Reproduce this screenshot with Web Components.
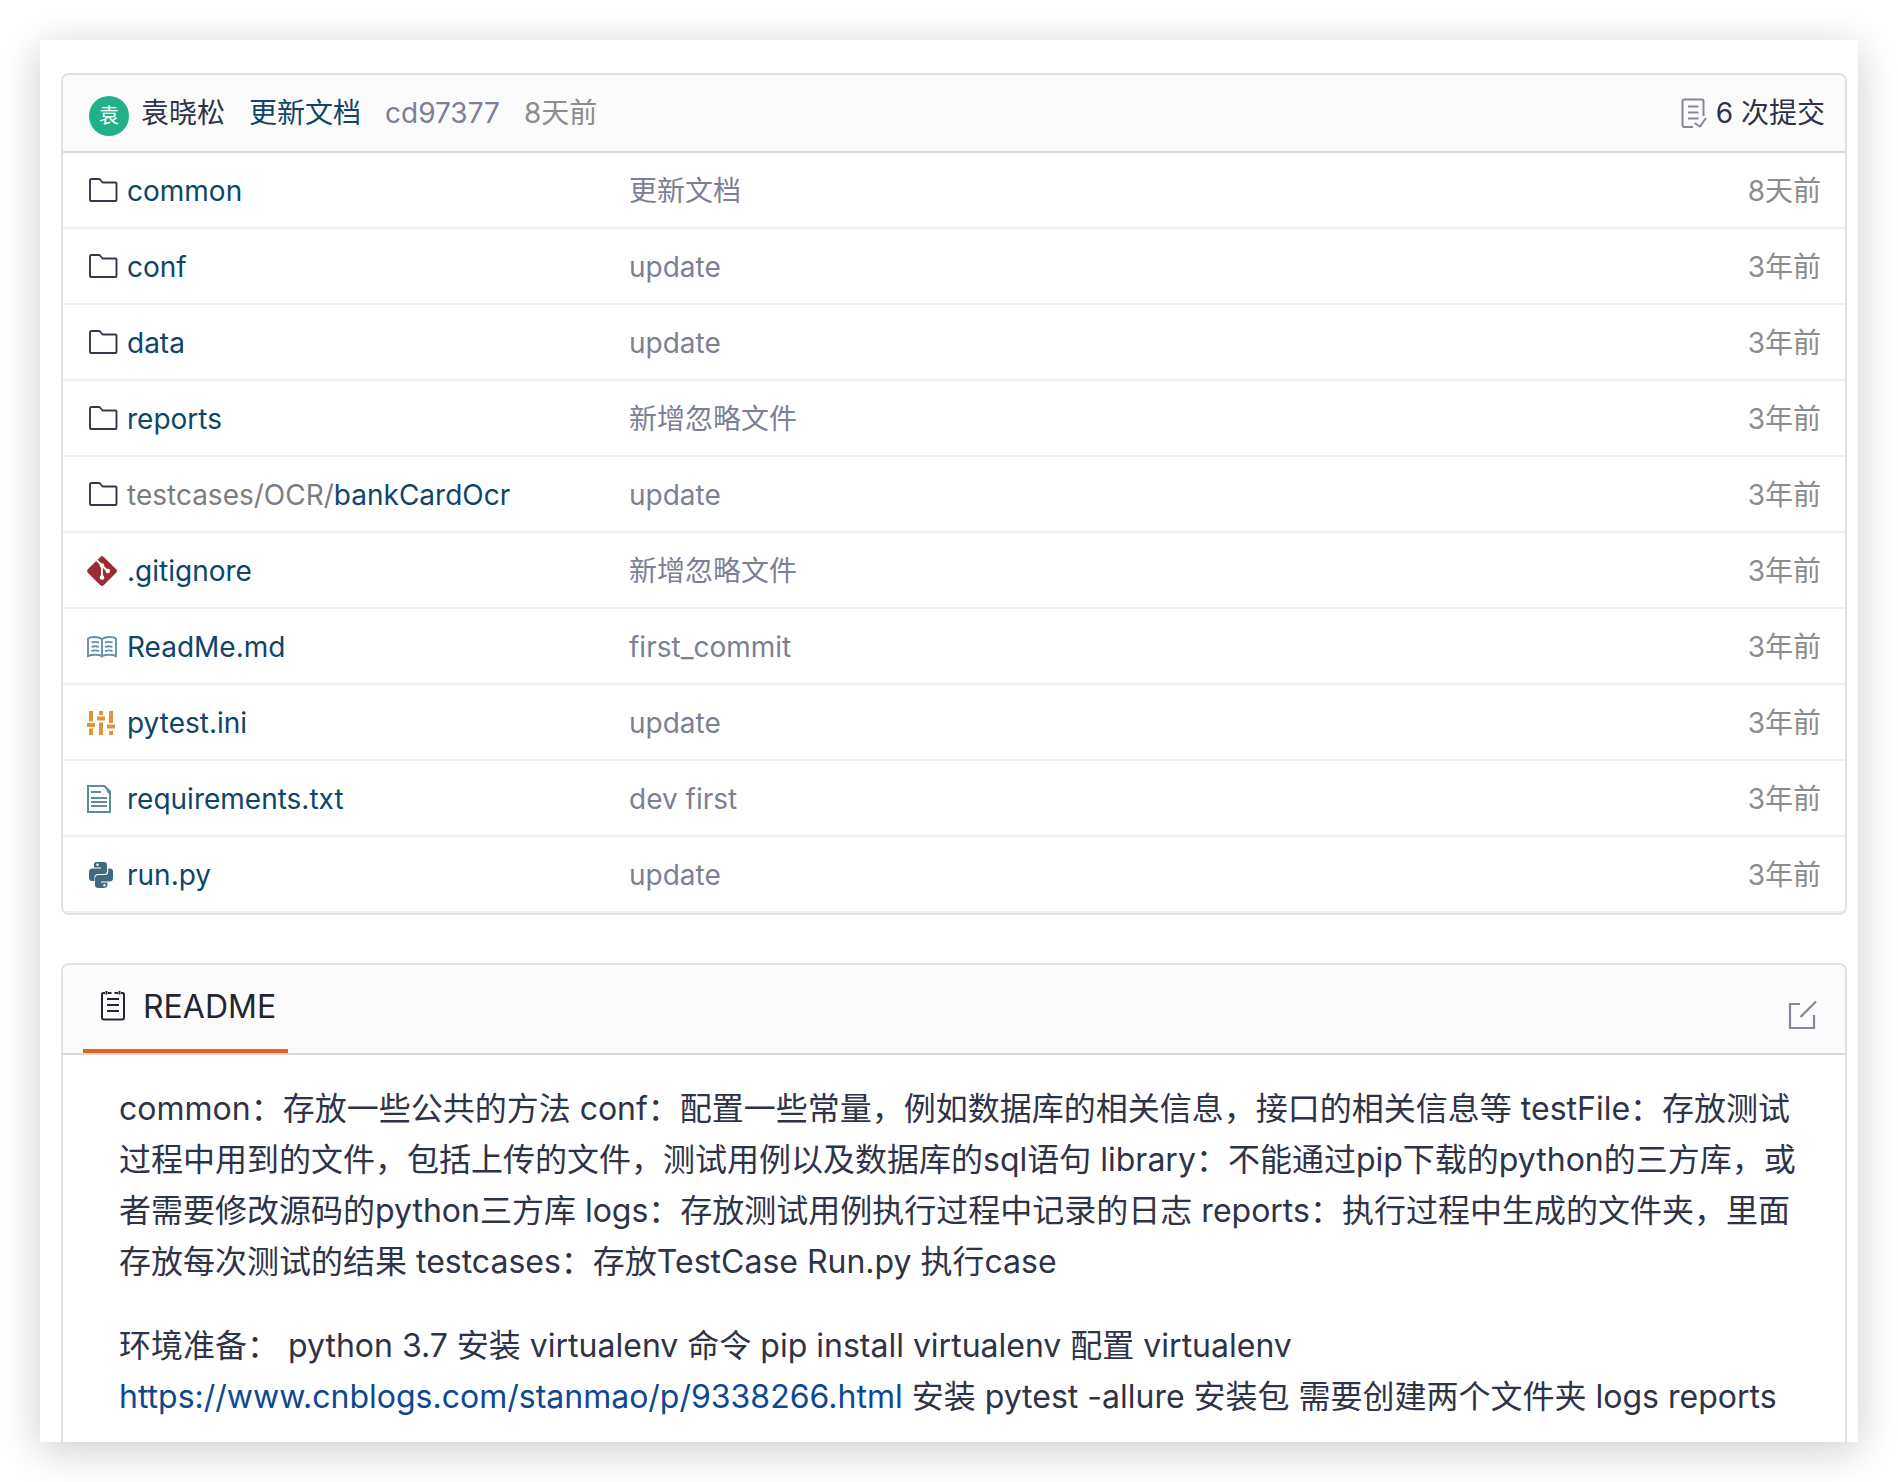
<!DOCTYPE html>
<html lang="zh-CN">
<head>
<meta charset="utf-8">
<meta name="viewport" content="width=device-width, initial-scale=1">
<title>README</title>
<style>
  body {
    margin: 0;
    padding: 40px;
    background: #fff;
    color: #2f3347;
    font-family: Inter, "Noto Sans CJK SC", sans-serif;
    font-size: 28px;
    line-height: 40px;
    --link: #10456a;
    --muted: #7c7f95;
    --date: #8c8c8c;
    --line: #dce2e6;
    --bar: #fbfbfb;
  }
  readme-body a {
    color: #0e4890;
    text-decoration: none;
    white-space: nowrap;
  }
</style>
</head>
<body>
<repo-window>
  <repo-panel>
    <commit-bar slot="bar" initial="袁" author="袁晓松" message="更新文档" sha="cd97377" age="8天前" count="6 次提交"></commit-bar>
    <file-table></file-table>
  </repo-panel>
  <repo-panel open-end>
    <readme-bar slot="bar">README</readme-bar>
    <readme-body>
      <p>common：存放一些公共的方法 conf：配置一些常量，例如数据库的相关信息，接口的相关信息等 testFile：存放测试过程中用到的文件，包括上传的文件，测试用例以及数据库的sql语句 library：不能通过pip下载的python的三方库，或者需要修改源码的python三方库 logs：存放测试用例执行过程中记录的日志 reports：执行过程中生成的文件夹，里面存放每次测试的结果 testcases：存放TestCase Run.py 执行case</p>
      <p>环境准备： python 3.7 安装 virtualenv 命令 pip install virtualenv 配置 virtualenv <a href="https://www.cnblogs.com/stanmao/p/9338266.html">https://www.cnblogs.com/stanmao/p/9338266.html</a> 安装 pytest -allure 安装包 需要创建两个文件夹 logs reports</p>
    </readme-body>
  </repo-panel>
</repo-window>

<script>
const ICONS = {
  folder: [30, 26, '<path d="M3 2.5Q3 1 4.500 1H12.500L15.500 4.500H28.500Q29.500 4.500 29.500 5.500V22Q29.500 23 28.500 23H4Q3 23 3 22Z" fill="none" stroke="#33374a" stroke-width="1.900" stroke-linejoin="round"/>'],
  git: [30, 30, '<path d="M13.300.9Q15 -.7 16.700.9L29.200 13.300Q30.800 15 29.200 16.700L16.700 29.200Q15 30.700 13.300 29.200L.8 16.700Q-.7 15 .8 13.300Z" fill="#9b2c31"/><g fill="none" stroke="#fff" stroke-width="1.900"><path d="M9.500 4L15 9.500V21"/><path d="M15 9.500L20.500 15"/></g><g fill="#fff"><circle cx="15" cy="9.500" r="2.300"/><circle cx="15" cy="21.500" r="2.300"/><circle cx="20.800" cy="15" r="2.300"/></g>'],
  book: [30, 22, '<g fill="none" stroke="#6391ab" stroke-width="1.900"><path d="M15 3Q12 1 7.500 1T1 2.500V20Q4 18.800 8 18.800T15 20Q18 18.800 22 18.800T29 20V2.500Q27 1 22.500 1T15 3V21.500"/><path d="M4.500 6.500Q8 5.300 12 6.500M4.500 10.800Q8 9.600 12 10.800M4.500 15Q8 13.800 12 15M18 6.500Q22 5.300 25.500 6.500M18 10.800Q22 9.600 25.500 10.800M18 15Q22 13.800 25.500 15"/></g>'],
  sliders: [28, 26, '<g fill="#e0933a"><path d="M2 1H6V11.500H2ZM0 13H8V17H6.500V17H0ZM2 18.500H6V25H2ZM12 1H16V5H12ZM10 6.500H18V10.500H10ZM12 12.500H16V25H12ZM22 1H26V13H22ZM20 14.500H28V18.500H20ZM22 21H26V25H22Z"/></g>'],
  text: [24, 28, '<path d="M1 1H17.500L23 6.500V27H1Z" fill="none" stroke="#5f8a9f" stroke-width="2"/><path d="M17 0L24 7V8.500H21Z" fill="#5f8a9f"/><path d="M4 7H14M4 13H20M4 17H20M4 21H20" stroke="#5f8a9f" stroke-width="1.800"/>'],
  python: [26, 26, '<g transform="translate(2)"><g fill="#3f6a7f"><path d="M7 0H15Q18 0 18 3V9Q18 12 15 12H9Q5.500 12 5.500 15.500V19H3Q0 19 0 15.500V10Q0 6.500 3.500 6.500H12V5.500H5V2Q5 0 7 0Z"/><path d="M19.200 6.500H21Q24 6.500 24 9.500V16Q24 19.500 20.500 19.500H12V20.500H18.500V22.500Q18.500 26 14.500 26H9.500Q6 26 6 23V16.500Q6 13 9.500 13H15.500Q19.200 13 19.200 9.500Z"/></g><circle cx="8.500" cy="2.800" r="1.200" fill="#fff"/><circle cx="15.500" cy="23.200" r="1.200" fill="#fff"/></g>'],
  commits: [26, 30, '<g fill="none" stroke="#85869b" stroke-width="2"><path d="M12 29H3.500Q1.500 29 1.500 27V3Q1.500 1.500 3.500 1.500H21Q22.500 1.500 22.500 3V18"/><path d="M7 8.500H17.500M7 14.500H17.500M7 20.500H17.500M13.500 25L19 28.500L25 20"/></g>'],
  notes: [26, 32, '<g fill="none" stroke="#24262e" stroke-width="2"><path d="M5 2H3.500Q2 2 2 3.500V26.500Q2 28.500 4 28.500H22Q24 28.500 24 26.500V3.500Q24 2 22.500 2H21"/><path d="M8 2H11.500M14.500 2H18M6.500 0V3.500M19.500 0V3.500M7 8H19M7 14H19M7 20H19"/></g>'],
  edit: [30, 30, '<path d="M12 4H2V28H26V15M12.500 17L28 1.500" fill="none" stroke="#85869b" stroke-width="2.200"/>']
};

const FILES = [
  ['folder', '', 'common', '更新文档', '8天前'],
  ['folder', '', 'conf', 'update', '3年前'],
  ['folder', '', 'data', 'update', '3年前'],
  ['folder', '', 'reports', '新增忽略文件', '3年前'],
  ['folder', 'testcases/OCR/', 'bankCardOcr', 'update', '3年前'],
  ['git', '', '.gitignore', '新增忽略文件', '3年前'],
  ['book', '', 'ReadMe.md', 'first_commit', '3年前'],
  ['sliders', '', 'pytest.ini', 'update', '3年前'],
  ['text', '', 'requirements.txt', 'dev first', '3年前'],
  ['python', '', 'run.py', 'update', '3年前']
];

class Base extends HTMLElement {
  connectedCallback() {
    if (!this.shadowRoot) this.attachShadow({ mode: 'open' }).innerHTML = this.render();
  }
}

customElements.define('repo-icon', class extends Base {
  render() {
    const [w, h, body] = ICONS[this.getAttribute('name')];
    return `<style>:host{display:block;flex:none}svg{display:block;overflow:visible}</style>
      <svg width="${w}" height="${h}" viewBox="0 0 ${w} ${h}" aria-hidden="true">${body}</svg>`;
  }
});

customElements.define('repo-window', class extends Base {
  render() {
    return `<style>
      :host{display:flex;flex-direction:column;gap:48px;padding:33px 11px 0 21px;background:#fff;
        box-shadow:0 8px 40px rgba(0,0,0,.2)}
    </style><slot></slot>`;
  }
});

customElements.define('repo-panel', class extends Base {
  render() {
    return `<style>
      :host{display:block;border:2px solid var(--line);border-radius:8px;overflow:hidden}
      :host([open-end]){border-bottom:0;border-radius:8px 8px 0 0}
      header{background:var(--bar);border-bottom:2px solid #d6dbdf}
    </style><header><slot name="bar"></slot></header><slot></slot>`;
  }
});

customElements.define('commit-bar', class extends Base {
  render() {
    const a = n => this.getAttribute(n);
    return `<style>
      :host{display:flex;align-items:center;gap:24px;height:76px;padding:0 20px 0 26px}
      .who{display:flex;align-items:center;gap:12px}
      .avatar{width:40px;height:40px;margin-top:6px;border-radius:50%;background:#22b08a;color:#fff;
        font-size:20px;text-align:center}
      a{text-decoration:none;color:inherit}
      .msg{color:var(--link)} .sha{color:var(--muted)} .age{color:var(--date)}
      .count{display:flex;align-items:center;gap:9px;margin-left:auto}
    </style>
    <span class="who"><span class="avatar">${a('initial')}</span><a href="#author">${a('author')}</a></span>
    <a class="msg" href="#commit">${a('message')}</a>
    <a class="sha" href="#sha">${a('sha')}</a>
    <span class="age">${a('age')}</span>
    <a class="count" href="#commits"><repo-icon name="commits"></repo-icon><span>${a('count')}</span></a>`;
  }
});

customElements.define('file-table', class extends Base {
  render() {
    const rows = FILES.map(([icon, path, name, msg, age]) => `<tr>
      <td class="name"><div><span class="icon"><repo-icon name="${icon}"></repo-icon></span><a href="#${name}">${path ? `<span>${path}</span>` : ''}${name}</a></div></td>
      <td class="msg">${msg}</td><td class="age">${age}</td></tr>`).join('');
    return `<style>
      :host{display:block}
      table{width:100%;table-layout:fixed;border-spacing:0}
      td{height:72px;padding:2px 0 0;border-bottom:2px solid #edf0f2}
      .name{width:542px;padding-left:24px}
      .name div{display:flex;align-items:center;gap:10px}
      .icon{width:30px;display:flex}
      a{color:var(--link);text-decoration:none}
      a span{color:#7d7d7d}
      .msg{color:var(--muted)}
      .age{width:200px;padding-right:24px;text-align:right;color:var(--date)}
    </style><table><tbody>${rows}</tbody></table>`;
  }
});

customElements.define('readme-bar', class extends Base {
  render() {
    return `<style>
      :host{display:flex;align-items:center;justify-content:space-between;height:88px;padding:0 27px 0 20px}
      .tab{display:flex;align-items:center;gap:17px;height:84px;padding:0 12px 0 17px;border-bottom:4px solid #e5631d;
        color:#24262e;font-size:32px;text-decoration:none}
      button{margin:12px 0 0;padding:0;border:0;background:none}
    </style>
    <a class="tab" href="#readme"><repo-icon name="notes"></repo-icon><span><slot></slot></span></a>
    <button type="button" aria-label="编辑"><repo-icon name="edit"></repo-icon></button>`;
  }
});

customElements.define('readme-body', class extends Base {
  render() {
    return `<style>
      :host{display:flex;flex-direction:column;gap:33px;padding:28px 40px 20px 56px;font-size:32px;line-height:51px}
      ::slotted(p){margin:0}
    </style><slot></slot>`;
  }
});
</script>
</body>
</html>
